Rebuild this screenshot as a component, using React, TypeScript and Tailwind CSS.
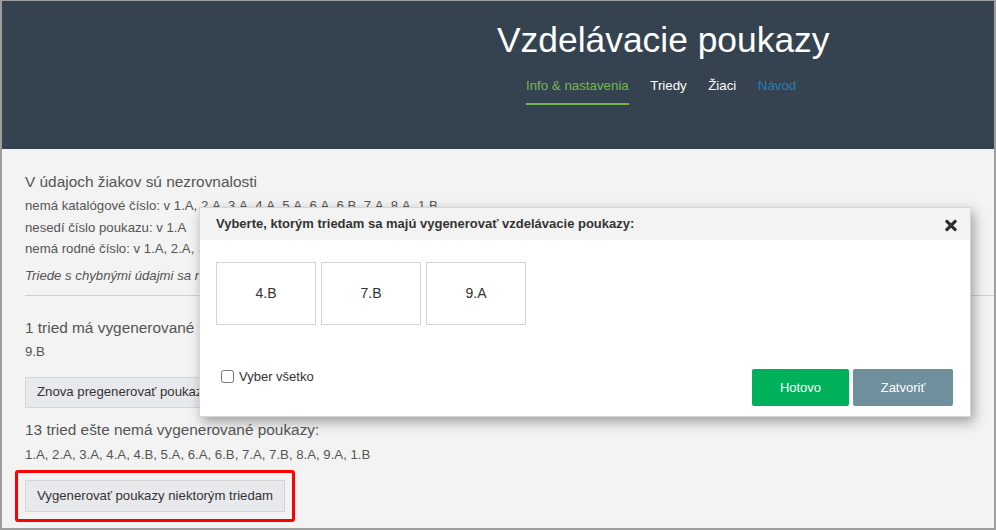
import React, { useState } from "react";
import { FaTimes } from "react-icons/fa";

const NAV = [
  { label: "Info & nastavenia", cls: "text-[#74b74f] border-[#74b74f]" },
  { label: "Triedy", cls: "text-white border-transparent" },
  { label: "Žiaci", cls: "text-white border-transparent" },
  { label: "Návod", cls: "text-[#2b7cb9] border-transparent" },
];

const PENDING = ["4.B", "7.B", "9.A"];

const GenerateModal: React.FC<{ onClose: () => void }> = ({ onClose }) => {
  const [all, setAll] = useState(false);
  return (
    <div className="absolute left-[197px] top-[206px] w-[772px] h-[210px] flex flex-col bg-white border border-[#d6d6d6] shadow-[3px_5px_12px_rgba(0,0,0,0.35)]">
      <div className="flex items-center h-[32px] pl-[16px] pr-[12px] bg-[#f3f3f3]">
        <span className="flex-1 text-[13px] font-bold text-[#333]">
          Vyberte, ktorým triedam sa majú vygenerovať vzdelávacie poukazy:
        </span>
        <button onClick={onClose} className="text-[#2e2e2e] mt-[3px]">
          <FaTimes className="w-[14px] h-[17px]" />
        </button>
      </div>
      <div className="flex gap-[5px] pl-[16px] pt-[22px]">
        {PENDING.map((c) => (
          <div
            key={c}
            className="w-[100px] h-[63px] flex items-center justify-center border border-[#d4d4d4] text-[14px] text-[#333]"
          >
            {c}
          </div>
        ))}
      </div>
      <div className="flex items-end justify-between pl-[21px] pr-[17px] mt-auto pb-[10px]">
        <label className="flex items-center gap-[5px] text-[13px] text-[#333] mb-[20px]">
          <input
            type="checkbox"
            checked={all}
            onChange={() => setAll(!all)}
            className="w-[13px] h-[13px] m-0"
          />
          Vyber všetko
        </label>
        <div className="flex gap-[4px]">
          <button className="w-[97px] h-[37px] rounded-[2px] bg-[#00b05a] text-white text-[13px] font-medium">
            Hotovo
          </button>
          <button onClick={onClose} className="w-[100px] h-[37px] rounded-[2px] bg-[#6f8f9c] text-white text-[13px] font-medium">
            Zatvoriť
          </button>
        </div>
      </div>
    </div>
  );
};

export default function App() {
  const [open, setOpen] = useState(true);

  return (
    <div className="relative w-[996px] h-[530px] overflow-hidden bg-[#f3f3f3] border-2 border-t border-[#9e9e9e] font-['Liberation_Sans',Arial,sans-serif]">
      {/* ── Header ── */}
      <header className="h-[148px] bg-[#34434f] pl-[495px] pt-[19px]">
        <h1 className="text-[35.4px] leading-[40px] text-white">Vzdelávacie poukazy</h1>
        <nav className="flex gap-[21.5px] ml-[29px] mt-[16px]">
          {NAV.map((n) => (
            <span key={n.label} className={`text-[13.3px] leading-[20px] font-medium pb-[7px] border-b-2 ${n.cls}`}>
              {n.label}
            </span>
          ))}
        </nav>
      </header>

      {/* ── Content ── */}
      <main className="pl-[23px] pt-[22px] text-[#555]">
        <div className="text-[15.4px] leading-[22px]">V údajoch žiakov sú nezrovnalosti</div>
        <div className="text-[13.2px] leading-[21.5px] mt-[2px]">
          <div>nemá katalógové číslo: v 1.A, 2.A, 3.A, 4.A, 5.A, 6.A, 6.B, 7.A, 8.A, 1.B</div>
          <div>nesedí číslo poukazu: v 1.A</div>
          <div>nemá rodné číslo: v 1.A, 2.A, 3.A, 4.A, 5.A, 6.A, 7.A, 8.A</div>
          <div className="italic mt-[5px]">Triede s chybnými údajmi sa nevygenerujú poukazy pre žiakov s chybami.</div>
        </div>
        <hr className="mt-[9px] border-0 border-t border-[#d0d0d0]" />

        <div className="text-[15.4px] leading-[22px] mt-[21px]">1 tried má vygenerované poukazy:</div>
        <div className="text-[13.2px] leading-[21.5px] mt-[2px]">9.B</div>
        <button className="mt-[14px] h-[31px] px-[11px] bg-[#e8e9ec] border border-[#d4d4d4] text-[13.2px] text-[#333]">
          Znova pregenerovať poukazy všetkým triedam
        </button>

        <div className="text-[15.4px] leading-[22px] mt-[11px]">13 tried ešte nemá vygenerované poukazy:</div>
        <div className="text-[13.2px] leading-[21.5px] mt-[3px]">
          1.A, 2.A, 3.A, 4.A, 4.B, 5.A, 6.A, 6.B, 7.A, 7.B, 8.A, 9.A, 1.B
        </div>
        <div className="-ml-[10px] mt-[5px] w-fit p-[7px] border-[3px] border-[#ff0000] rounded-[3px]">
          <button
            onClick={() => setOpen(true)}
            className="block h-[32px] px-[11px] bg-[#e8e9ec] border border-[#d4d4d4] text-[13.2px] text-[#333]"
          >
            Vygenerovať poukazy niektorým triedam
          </button>
        </div>
      </main>

      {open && <GenerateModal onClose={() => setOpen(false)} />}
    </div>
  );
}
